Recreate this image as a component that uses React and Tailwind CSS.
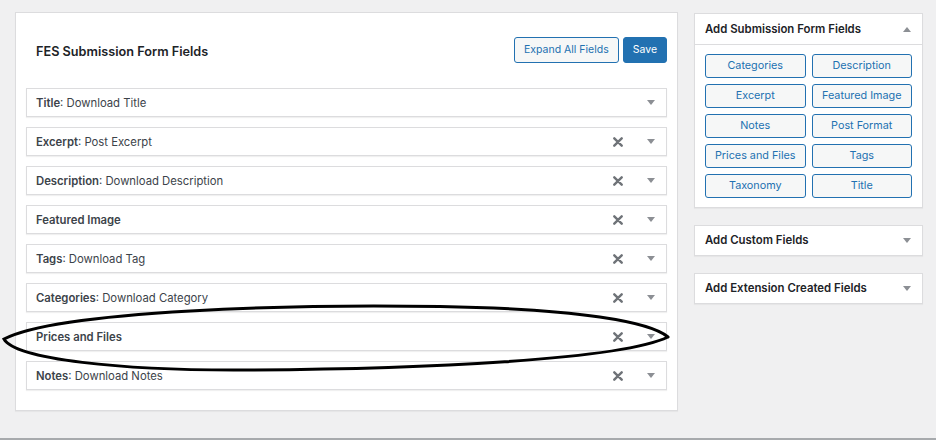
import React from "react";

const fields = [
  { label: "Title", value: "Download Title", removable: false },
  { label: "Excerpt", value: "Post Excerpt", removable: true },
  { label: "Description", value: "Download Description", removable: true },
  { label: "Featured Image", value: null, removable: true },
  { label: "Tags", value: "Download Tag", removable: true },
  { label: "Categories", value: "Download Category", removable: true },
  { label: "Prices and Files", value: null, removable: true },
  { label: "Notes", value: "Download Notes", removable: true },
];

const addButtons = [
  "Categories",
  "Description",
  "Excerpt",
  "Featured Image",
  "Notes",
  "Post Format",
  "Prices and Files",
  "Tags",
  "Taxonomy",
  "Title",
];

function CaretDown() {
  return (
    <svg width="8" height="5" viewBox="0 0 8 5">
      <path d="M0 0 L8 0 L4 5 Z" fill="#8c8f94" />
    </svg>
  );
}

function CaretUp() {
  return (
    <svg width="8" height="5" viewBox="0 0 8 5">
      <path d="M0 5 L8 5 L4 0 Z" fill="#8c8f94" />
    </svg>
  );
}

function RemoveIcon() {
  return (
    <svg width="10" height="10" viewBox="0 0 10 10">
      <path
        d="M1.3 1.3 L8.7 8.7 M8.7 1.3 L1.3 8.7"
        stroke="#6f7378"
        strokeWidth="2.4"
        strokeLinecap="round"
      />
    </svg>
  );
}

function FieldRow({ field }) {
  return (
    <div className="flex h-[29px] items-center border border-[#dcdcde] bg-white pl-[9px] pr-[11px] shadow-[0_1px_1px_rgba(0,0,0,0.06)]">
      <div className="flex-1 pt-[2px] text-[11.3px] text-[#3c434a]">
        <span className="font-semibold">{field.label}</span>
        {field.value && <span>: {field.value}</span>}
      </div>
      {field.removable && (
        <span className="mr-[24px] flex items-center">
          <RemoveIcon />
        </span>
      )}
      <CaretDown />
    </div>
  );
}

function SideBox({ title }) {
  return (
    <div className="flex h-[31px] items-center justify-between border border-[#dcdcde] bg-white pl-[10px] pr-[11px] shadow-[0_1px_1px_rgba(0,0,0,0.04)]">
      <span className="pt-[1px] text-[11.4px] font-semibold text-[#1d2327]">{title}</span>
      <CaretDown />
    </div>
  );
}

export default function App() {
  return (
    <div
      className="relative h-[440px] w-[936px] overflow-hidden border-b-2 border-[#a7aaad] bg-[#f0f0f1]"
      style={{ fontFamily: "Inter, 'Liberation Sans', sans-serif" }}
    >
      <div className="flex items-start pl-[15px] pt-[12px]">
        {/* main form editor */}
        <div className="w-[663px] border border-[#dcdcde] bg-white pb-[20px] pl-[10px] pr-[10px] pt-[24px] shadow-[0_1px_1px_rgba(0,0,0,0.04)]">
          <div className="flex h-[26px] items-center justify-between">
            <h2 className="pl-[10px] pt-[3px] text-[12.7px] font-semibold text-[#1d2327]">
              FES Submission Form Fields
            </h2>
            <div className="flex gap-[4px]">
              <button className="h-[26px] rounded-[3px] border border-[#2271b1] bg-[#f6f7f7] px-[9px] text-[10.5px] text-[#2271b1]">
                Expand All Fields
              </button>
              <button className="h-[26px] rounded-[3px] border border-[#2271b1] bg-[#2271b1] px-[9px] text-[10.5px] text-white">
                Save
              </button>
            </div>
          </div>
          <div className="mt-[25px] flex flex-col gap-[10px]">
            {fields.map((f) => (
              <FieldRow key={f.label} field={f} />
            ))}
          </div>
        </div>

        {/* sidebar */}
        <div className="ml-[16px] flex w-[229px] flex-col gap-[17px] pt-[1px]">
          <div className="border border-[#dcdcde] bg-white shadow-[0_1px_1px_rgba(0,0,0,0.04)]">
            <div className="flex h-[31px] items-center justify-between border-b border-[#dcdcde] pl-[10px] pr-[11px]">
              <span className="pt-[1px] text-[11.4px] font-semibold text-[#1d2327]">
                Add Submission Form Fields
              </span>
              <CaretUp />
            </div>
            <div className="grid grid-cols-2 gap-x-[6px] gap-y-[6px] px-[10px] pb-[9px] pt-[9px]">
              {addButtons.map((b) => (
                <button
                  key={b}
                  className="h-[24px] rounded-[3px] border border-[#2271b1] bg-[#f6f7f7] text-[10.8px] text-[#2271b1]"
                >
                  {b}
                </button>
              ))}
            </div>
          </div>
          <SideBox title="Add Custom Fields" />
          <SideBox title="Add Extension Created Fields" />
        </div>
      </div>

      {/* hand-drawn highlight loop */}
      <svg
        className="pointer-events-none absolute left-0 top-0"
        width="936"
        height="440"
        viewBox="0 0 936 440"
      >
        <path
          d="M668 337 C650 322 580 309 440 306.5 C300 304 60 310 4 339 C15 359 120 371 250 370 C420 369 620 360 668 337"
          fill="none"
          stroke="#000"
          strokeWidth="3"
          strokeLinecap="round"
        />
      </svg>
    </div>
  );
}
